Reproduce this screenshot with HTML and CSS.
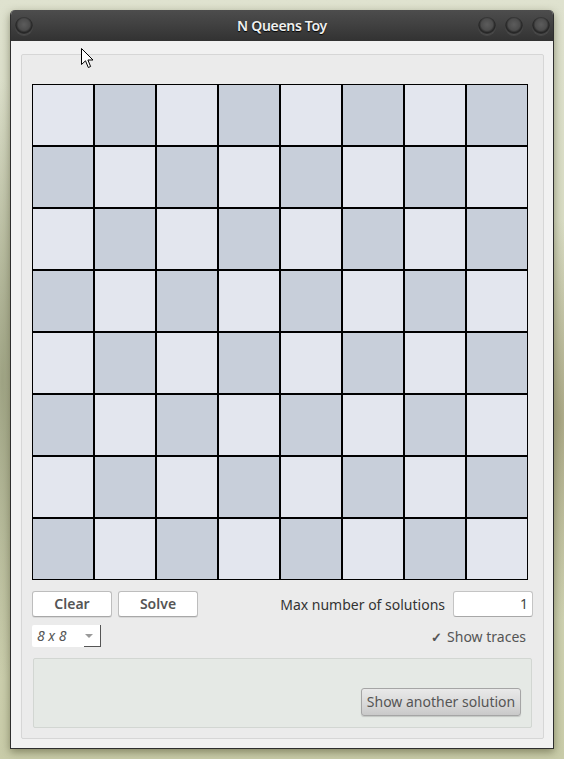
FILE: index.html
```html
<!DOCTYPE html>
<html>
<head>
<meta charset="utf-8">
<link rel="stylesheet" href="styles.css">
</head>
<body>
<div class="desktop">
  <div class="window">
    <div class="titlebar">
      <span class="tb-btn"></span>
      <span class="title">N Queens Toy</span>
      <span class="tb-group"><span class="tb-btn"></span><span class="tb-btn"></span><span class="tb-btn"></span></span>
    </div>
    <div class="content">
      <div class="frame">
        <div class="board">
          <div class="c l"></div><div class="c d"></div><div class="c l"></div><div class="c d"></div><div class="c l"></div><div class="c d"></div><div class="c l"></div><div class="c d"></div>
          <div class="c d"></div><div class="c l"></div><div class="c d"></div><div class="c l"></div><div class="c d"></div><div class="c l"></div><div class="c d"></div><div class="c l"></div>
          <div class="c l"></div><div class="c d"></div><div class="c l"></div><div class="c d"></div><div class="c l"></div><div class="c d"></div><div class="c l"></div><div class="c d"></div>
          <div class="c d"></div><div class="c l"></div><div class="c d"></div><div class="c l"></div><div class="c d"></div><div class="c l"></div><div class="c d"></div><div class="c l"></div>
          <div class="c l"></div><div class="c d"></div><div class="c l"></div><div class="c d"></div><div class="c l"></div><div class="c d"></div><div class="c l"></div><div class="c d"></div>
          <div class="c d"></div><div class="c l"></div><div class="c d"></div><div class="c l"></div><div class="c d"></div><div class="c l"></div><div class="c d"></div><div class="c l"></div>
          <div class="c l"></div><div class="c d"></div><div class="c l"></div><div class="c d"></div><div class="c l"></div><div class="c d"></div><div class="c l"></div><div class="c d"></div>
          <div class="c d"></div><div class="c l"></div><div class="c d"></div><div class="c l"></div><div class="c d"></div><div class="c l"></div><div class="c d"></div><div class="c l"></div>
        </div>
        <div class="row1">
          <div class="btns">
            <div class="btn">Clear</div>
            <div class="btn">Solve</div>
          </div>
          <div class="max">
            <span class="max-label">Max number of solutions</span>
            <div class="spin">1</div>
          </div>
        </div>
        <div class="row2">
          <div class="combo"><span class="combo-text">8 x 8</span><span class="combo-arrow"></span></div>
          <div class="check"><span class="tick">✓</span><span>Show traces</span></div>
        </div>
        <div class="msgbox">
          <div class="btn2">Show another solution</div>
        </div>
      </div>
    </div>
  </div>
  <svg class="cursor" width="13" height="21" viewBox="0 0 13 21">
    <path d="M0.5 0.5 L0.5 16.5 L4.5 12.8 L7.3 19.5 L9.6 18.5 L6.9 12 L12 12 Z" fill="#fff" stroke="#000" stroke-width="1"/>
  </svg>
</div>
</body>
</html>
```
FILE: styles.css
```css
html, body {
  margin: 0;
  padding: 0;
}
body {
  width: 564px;
  height: 759px;
  overflow: hidden;
  font-family: "Noto Sans", "Open Sans", sans-serif;
}
.desktop {
  position: relative;
  width: 564px;
  height: 759px;
  padding-top: 10px;
  box-sizing: border-box;
  background:
    radial-gradient(ellipse 40px 200px at 560px 420px, rgba(120,110,70,0.45), rgba(120,110,70,0) 100%),
    radial-gradient(ellipse 30px 300px at 2px 380px, rgba(110,115,80,0.5), rgba(110,115,80,0) 100%),
    linear-gradient(180deg, #dfe2cf 0%, #d3d7bb 50%, #c9cca9 100%);
}
.window {
  margin-left: 10px;
  width: 544px;
  height: 739px;
  box-sizing: border-box;
  border: 1px solid #2e2e2e;
  border-top: none;
  border-radius: 5px 5px 0 0;
  overflow: hidden;
  box-shadow: 0 3px 9px rgba(60,60,30,0.5);
  display: flex;
  flex-direction: column;
  background: #efefef;
}
.titlebar {
  height: 31px;
  flex: none;
  background: linear-gradient(180deg, #4d4d4d 0%, #404040 50%, #323232 100%);
  display: flex;
  align-items: center;
  justify-content: space-between;
  padding: 0 3px 0 4px;
  position: relative;
}
.title {
  position: absolute;
  left: 0;
  right: 0;
  text-align: center;
  color: #f0f0f0;
  font-size: 14px;
  font-weight: 600;
  letter-spacing: -0.3px;
  text-shadow: 0 1px 1px #000;
  top: 6px;
}
.tb-group {
  display: flex;
  gap: 9px;
}
.tb-btn {
  width: 18px;
  height: 18px;
  border-radius: 50%;
  background: radial-gradient(circle at 50% 42%, #5c5c5c 0%, #4c4c4c 42%, #262626 58%, #333 75%, #555 100%);
  box-shadow: inset 0 -1px 1px rgba(255,255,255,0.15), 0 1px 0 rgba(255,255,255,0.08);
  position: relative;
  z-index: 1;
}
.content {
  flex: 1;
  padding: 13px 9px 9px 10px;
  background: #f1f1f1;
}
.frame {
  width: 523px;
  height: 685px;
  box-sizing: border-box;
  border: 1px solid #d6d6d6;
  border-radius: 2px;
  background: #ebebeb;
  padding: 29px 10px 10px 10px;
  display: flex;
  flex-direction: column;
}
.board {
  display: grid;
  grid-template-columns: repeat(8, 62px);
  grid-template-rows: repeat(8, 62px);
  width: 496px;
  height: 496px;
}
.c {
  border: 1px solid #000;
}
.l {
  background: #e3e6ee;
}
.d {
  background: #c8cfda;
}
.row1 {
  margin-top: 11px;
  height: 26px;
  display: flex;
  justify-content: space-between;
  align-items: center;
}
.btns {
  display: flex;
  gap: 6px;
}
.btn {
  width: 80px;
  height: 26px;
  box-sizing: border-box;
  border: 1px solid #bdbdbd;
  border-bottom-color: #a8a8a8;
  border-radius: 3px;
  background: #fff;
  box-shadow: 0 1px 0 rgba(0,0,0,0.08);
  color: #555;
  font-weight: 600;
  font-size: 14px;
  display: flex;
  align-items: center;
  justify-content: center;
  padding-bottom: 1px;
}
.max {
  display: flex;
  align-items: center;
  gap: 8px;
}
.max-label {
  color: #333;
  font-size: 14px;
}
.spin {
  width: 80px;
  height: 26px;
  box-sizing: border-box;
  border: 1px solid #c4c4c4;
  border-bottom-color: #a8a8a8;
  border-radius: 3px;
  background: #fff;
  color: #444;
  font-size: 14px;
  text-align: right;
  padding: 2px 4px 0 0;
}
.row2 {
  margin-top: 8px;
  height: 21px;
  display: flex;
  justify-content: space-between;
  align-items: center;
}
.combo {
  width: 69px;
  height: 22px;
  box-sizing: border-box;
  background: #fff;
  border-radius: 2px 0 0 2px;
  position: relative;
  display: flex;
  align-items: center;
  justify-content: space-between;
  padding: 0 7px 0 5px;
  border-right: 1px solid #555;
}
.combo::after {
  content: "";
  position: absolute;
  right: -1px;
  bottom: 0;
  width: 17px;
  height: 1px;
  background: #555;
}
.combo-text {
  font-style: italic;
  color: #555;
  font-size: 14px;
}
.combo-arrow {
  width: 0;
  height: 0;
  border-left: 4px solid transparent;
  border-right: 4px solid transparent;
  border-top: 4px solid #9a9a9a;
  margin-top: 1px;
}
.check {
  display: flex;
  align-items: center;
  gap: 5px;
  color: #555;
  font-size: 14px;
  padding-right: 7px;
  margin-top: 2px;
}
.tick {
  font-size: 13px;
  font-weight: bold;
  color: #555;
}
.msgbox {
  margin: 12px 1px 0 1px;
  height: 70px;
  box-sizing: border-box;
  border: 1px solid #d2d6d2;
  border-radius: 2px;
  background: #e5e9e5;
  display: flex;
  justify-content: flex-end;
  align-items: flex-end;
  padding: 0 10px 11px 0;
}
.btn2 {
  width: 160px;
  height: 28px;
  box-sizing: border-box;
  border: 1px solid #a5a5a5;
  border-radius: 3px;
  background: linear-gradient(180deg, #e9e9e9 0%, #d8d8d8 60%, #c9c9c9 100%);
  box-shadow: 0 1px 1px rgba(0,0,0,0.15);
  color: #555;
  font-size: 14px;
  display: flex;
  align-items: center;
  justify-content: center;
  padding-bottom: 1px;
}
.cursor {
  position: absolute;
  left: 81px;
  top: 48px;
}
```
